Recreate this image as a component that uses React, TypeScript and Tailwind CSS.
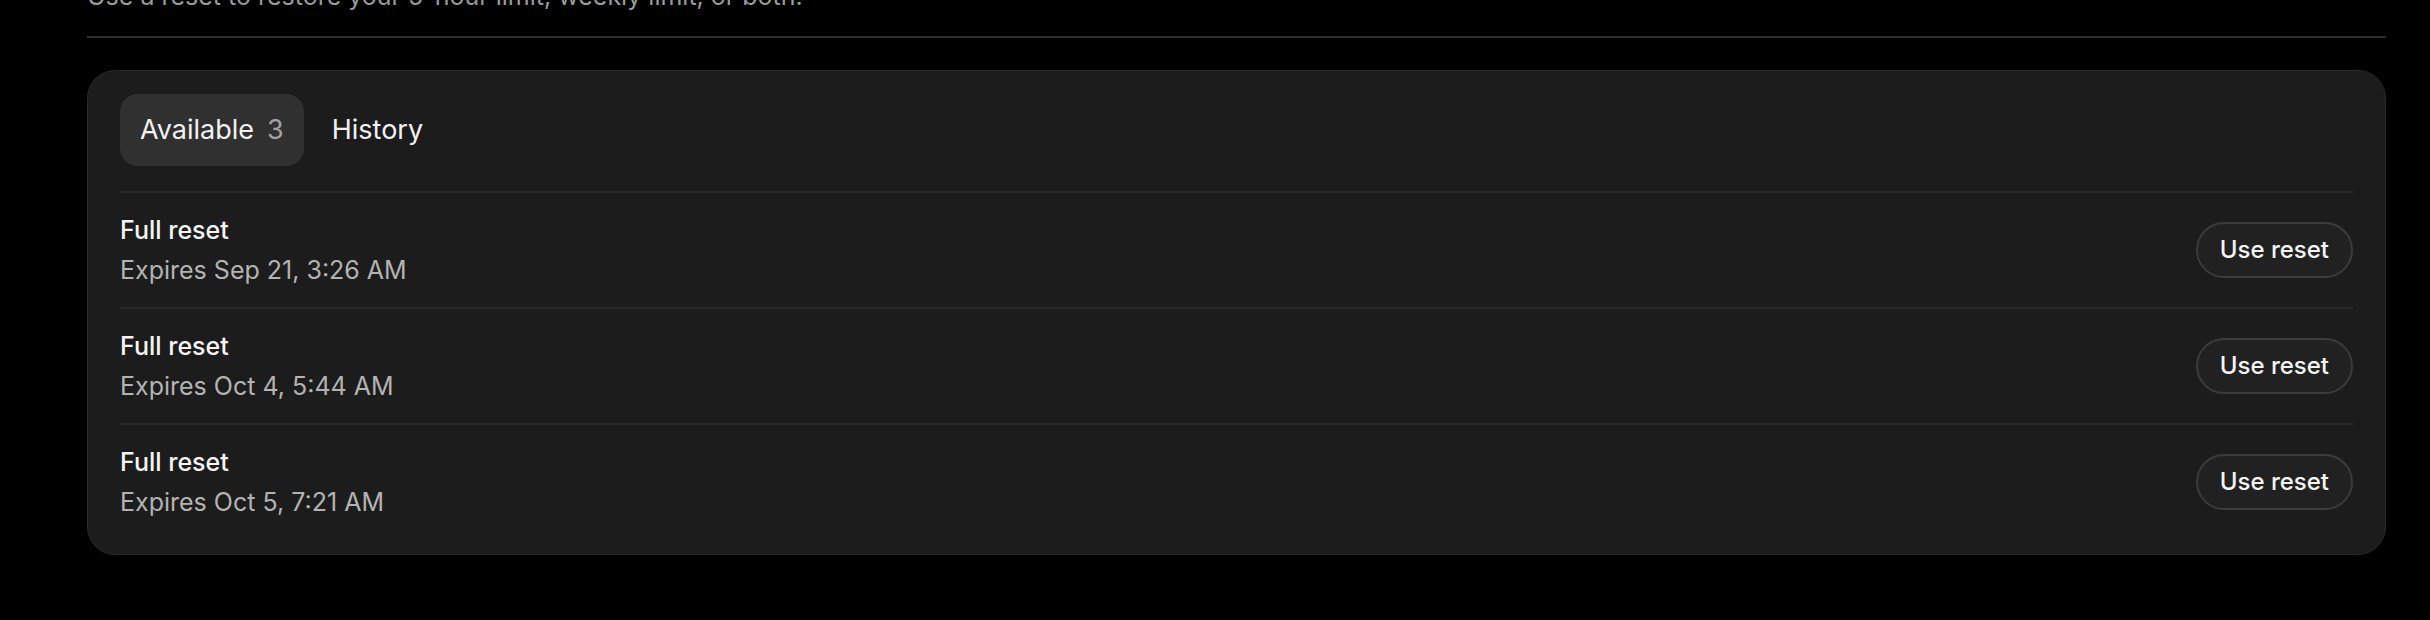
import React from 'react';

const resets = [
  { id: 1, title: 'Full reset', expires: 'Expires Sep 21, 3:26 AM' },
  { id: 2, title: 'Full reset', expires: 'Expires Oct 4, 5:44 AM' },
  { id: 3, title: 'Full reset', expires: 'Expires Oct 5, 7:21 AM' },
];

const App: React.FC = () => {
  return (
    <div className="min-h-[620px] w-[2430px] overflow-hidden bg-black font-['Inter','Liberation_Sans',sans-serif] antialiased">
      <div className="ml-[87px] w-[2299px]">
        {/* Intro text, partly scrolled off the top */}
        <p className="-mt-[24px] text-[25px] leading-[40px] text-[#9a9a9a]">
          Use a reset to restore your 5-hour limit, weekly limit, or both.
        </p>
        <div className="mt-[20px] border-t-2 border-[#2e2e2e]"></div>

        {/* Resets card */}
        <div className="mt-[32px] rounded-[28px] border border-[#292929] bg-[#1c1c1c] px-[32px] pt-[23px] pb-[15px]">
          <div className="flex items-center gap-[8px] pb-[25px]">
            <button className="flex h-[72px] items-center gap-[13px] rounded-[18px] bg-[#303030] px-[20px] text-[27px] text-[#f2f2f2]">
              <span>Available</span>
              <span className="text-[#a3a3a3]">3</span>
            </button>
            <button className="flex h-[72px] items-center rounded-[18px] px-[20px] text-[27px] text-[#f2f2f2]">
              History
            </button>
          </div>

          <ul>
            {resets.map((r) => (
              <li
                key={r.id}
                className="flex items-center justify-between border-t-2 border-[#282828] py-[17px]"
              >
                <div>
                  <p className="text-[25px] leading-[40px] font-medium text-[#f5f5f5]">{r.title}</p>
                  <p className="text-[25px] leading-[40px] text-[#b3b3b3]">{r.expires}</p>
                </div>
                <button className="flex h-[56px] items-center rounded-full border-2 border-[#3b3b3b] bg-[#212121] px-[22px] text-[24px] font-medium text-[#f5f5f5]">
                  Use reset
                </button>
              </li>
            ))}
          </ul>
        </div>
      </div>
    </div>
  );
};

export default App;
